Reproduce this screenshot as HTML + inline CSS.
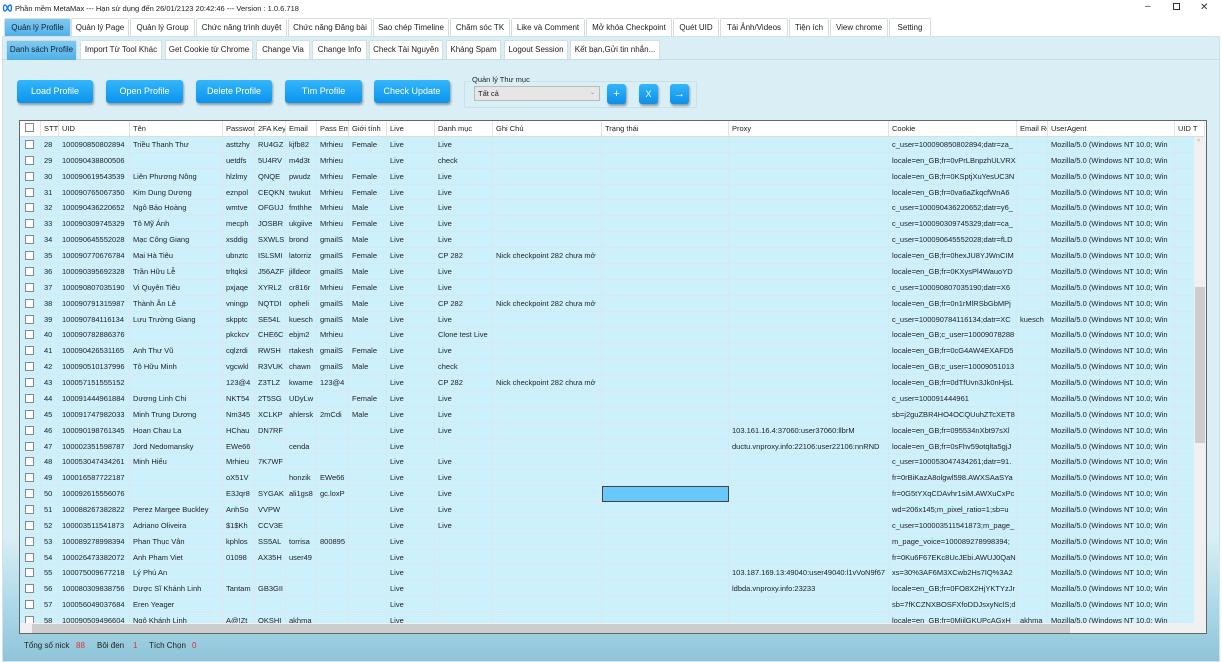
<!DOCTYPE html>
<html><head><meta charset="utf-8">
<style>
*{box-sizing:border-box;margin:0;padding:0}
body{width:1222px;height:662px;overflow:hidden;background:#fff;font-family:"Liberation Sans","Noto Sans CJK SC",sans-serif;font-size:8px;color:#222;position:relative}
.abs{position:absolute}
.title{left:0;top:0;width:1222px;height:17px;background:#fff}
.tab{position:absolute;height:19px;border:1px solid #d6dde0;border-bottom:none;background:#fff;font-size:8px;text-align:center;line-height:18px;color:#222;border-radius:2px 2px 0 0}
.tab.act{background:linear-gradient(#7fc9f1,#4fb0e8);color:#123}
.panel{left:2px;top:36px;width:1218px;height:626px;background:linear-gradient(#d9eff5 0,#d9eff5 80%,#a6d5e6 93%,#8fc4d8 100%);border:1px solid #cfe3ea}
.btn{position:absolute;top:80px;height:23px;border-radius:3px;background:linear-gradient(#33b6fb,#0c93ee);color:#fff;font-size:9px;text-align:center;line-height:23px;box-shadow:1px 2px 2px rgba(0,0,0,.35)}
.sb{position:absolute;top:84px;width:19px;height:20px;border-radius:3px;background:linear-gradient(#33b6fb,#0c8fe9);color:#fff;text-align:center;line-height:20px;font-size:11px;box-shadow:1px 2px 2px rgba(0,0,0,.35)}
.grid{left:19px;top:120px;width:1188px;height:514px;border:1px solid #666;background:#fff;overflow:hidden}
.row{position:absolute;left:0;height:15.87px;display:flex;white-space:nowrap}
.row div{flex:none;overflow:hidden;border-right:1px solid #dbe7ea;border-bottom:1px solid #dbe7ea;padding-left:3px;line-height:15px;font-size:7.5px}
.hd div{background:#fff;border-right:1px solid #e3e3e3;border-bottom:1px solid #ddd}
.bd div{background:#cdf0fd}
.cb{width:9px;height:9px;border:1px solid #888;background:#fff;display:inline-block;margin-top:3px;margin-left:2px}
</style></head><body>
<div class="abs title">
<svg class="abs" style="left:2px;top:4px" width="11" height="8" viewBox="0 0 11 8"><path d="M3 1C1 1 1 7 3 7 5 7 6 1 8 1 10 1 10 7 8 7 6 7 5 1 3 1Z" fill="none" stroke="#1877f2" stroke-width="1.4"/></svg>
<div class="abs" style="left:15px;top:4px;font-size:7.5px">Phần mềm MetaMax --- Hạn sử dụng đến 26/01/2123 20:42:46 --- Version : 1.0.6.718</div>
<div class="abs" style="left:1145px;top:1px;font-size:10px;color:#333">–</div>
<div class="abs" style="left:1173px;top:3px;width:7px;height:7px;border:1px solid #333"></div>
<div class="abs" style="left:1200px;top:2px;font-size:10px;color:#333">✕</div>
</div>
<div class="tab act" style="left:4px;top:18px;width:67px">Quản lý Profile</div>
<div class="tab" style="left:71px;top:18px;width:58px">Quản lý Page</div>
<div class="tab" style="left:130px;top:18px;width:65px">Quản lý Group</div>
<div class="tab" style="left:196px;top:18px;width:91px">Chức năng trình duyệt</div>
<div class="tab" style="left:288px;top:18px;width:84px">Chức năng Đăng bài</div>
<div class="tab" style="left:373px;top:18px;width:76px">Sao chép Timeline</div>
<div class="tab" style="left:450px;top:18px;width:60px">Chăm sóc TK</div>
<div class="tab" style="left:511px;top:18px;width:74px">Like và Comment</div>
<div class="tab" style="left:586px;top:18px;width:86px">Mở khóa Checkpoint</div>
<div class="tab" style="left:673px;top:18px;width:46px">Quét UID</div>
<div class="tab" style="left:720px;top:18px;width:68px">Tải Ảnh/Videos</div>
<div class="tab" style="left:789px;top:18px;width:40px">Tiện ích</div>
<div class="tab" style="left:830px;top:18px;width:58px">View chrome</div>
<div class="tab" style="left:889px;top:18px;width:42px">Setting</div>
<div class="abs panel"></div>
<div class="abs" style="left:2px;top:59px;width:1218px;height:1px;background:#c4dde6"></div>
<div class="tab act" style="left:6px;top:40px;width:71px;height:20px">Danh sách Profile</div>
<div class="tab" style="left:80px;top:40px;width:82px">Import Từ Tool Khác</div>
<div class="tab" style="left:165px;top:40px;width:88px">Get Cookie từ Chrome</div>
<div class="tab" style="left:256px;top:40px;width:54px">Change Via</div>
<div class="tab" style="left:312px;top:40px;width:55px">Change Info</div>
<div class="tab" style="left:369px;top:40px;width:74px">Check Tài Nguyên</div>
<div class="tab" style="left:446px;top:40px;width:55px">Kháng Spam</div>
<div class="tab" style="left:504px;top:40px;width:64px">Logout Session</div>
<div class="tab" style="left:570px;top:40px;width:90px">Kết bạn,Gửi tin nhắn...</div>
<div class="btn" style="left:17px;width:76px">Load Profile</div>
<div class="btn" style="left:106px;width:77px">Open Profile</div>
<div class="btn" style="left:196px;width:76px">Delete Profile</div>
<div class="btn" style="left:285px;width:77px">Tìm Profile</div>
<div class="btn" style="left:374px;width:76px">Check Update</div>
<div class="abs" style="left:464px;top:81px;width:233px;height:27px;border:1px solid #c8e2ea;border-radius:2px"></div>
<div class="abs" style="left:471px;top:75px;font-size:7.5px;background:#d9eff5;padding:0 1px">Quản lý Thư mục</div>
<div class="abs" style="left:474px;top:86px;width:126px;height:15px;border:1px solid #bbb;background:#e6e6e6;font-size:7.5px;line-height:13px;padding-left:3px">Tất cả<span style="position:absolute;right:4px;color:#888;font-size:6px">⌄</span></div>
<div class="sb" style="left:607px">+</div>
<div class="sb" style="left:639px;font-size:9px">X</div>
<div class="sb" style="left:670px">→</div>
<div class="abs grid">
<div class="row hd" style="top:0;height:16px">
<div style="width:21px"><span class="cb" style="margin-top:2px"></span></div><div style="width:18px">STT</div><div style="width:71px">UID</div><div style="width:93px">Tên</div><div style="width:32px">Password</div><div style="width:31px">2FA Key</div><div style="width:31px">Email</div><div style="width:32px">Pass Email</div><div style="width:38px">Giới tính</div><div style="width:48px">Live</div><div style="width:58px">Danh mục</div><div style="width:109px">Ghi Chú</div><div style="width:127px">Trạng thái</div><div style="width:160px">Proxy</div><div style="width:128px">Cookie</div><div style="width:31px">Email Recovery</div><div style="width:127px">UserAgent</div><div style="width:30px">UID T</div>
</div>
<div id="rows"></div>
<div class="abs" style="left:1174px;top:16px;width:12px;height:486px;background:#f0f0f0"></div>
<div class="abs" style="left:1175px;top:166px;width:10px;height:156px;background:#cdcdcd"></div>
<div class="abs" style="left:1177px;top:18px;font-size:7px;color:#aaa">^</div>
<div class="abs" style="left:0;top:502px;width:1186px;height:11px;background:#f0f0f0"></div>
<div class="abs" style="left:12px;top:503px;width:1038px;height:9px;background:#cdcdcd"></div>
</div>
<div class="abs" style="left:24px;top:641px;font-size:8px">Tổng số nick</div>
<div class="abs" style="left:76px;top:641px;font-size:8px;color:#e03030">88</div>
<div class="abs" style="left:97px;top:641px;font-size:8px">Bôi đen</div>
<div class="abs" style="left:133px;top:641px;font-size:8px;color:#e03030">1</div>
<div class="abs" style="left:149px;top:641px;font-size:8px">Tích Chọn</div>
<div class="abs" style="left:192px;top:641px;font-size:8px;color:#e03030">0</div>
<script>
var W=[21,18,71,93,32,31,31,32,38,48,58,109,127,160,128,31,127,30];
var UA="Mozilla/5.0 (Windows NT 10.0; Win";
var N="Nick checkpoint 282 chưa mở";
var D=[
[28,"100090850802894","Triều Thanh Thư","asttzhy","RU4GZ","kjfb82","Mrhieu","Female","Live","Live","","","","c_user=100090850802894;datr=za_",""],
[29,"100090438800506","","uetdfs","5U4RV","m4d3t","Mrhieu","","Live","check","","","","locale=en_GB;fr=0vPrLBnpzhULVRX",""],
[30,"100090619543539","Liên Phương Nông","hlzlmy","QNQE","pwudz","Mrhieu","Female","Live","Live","","","","locale=en_GB;fr=0KSptjXuYesUC3N",""],
[31,"100090765067350","Kim Dung Dương","eznpol","CEQKN","twukut","Mrhieu","Female","Live","Live","","","","locale=en_GB;fr=0va6aZkqcfWnA6",""],
[32,"100090436220652","Ngô Bảo Hoàng","wmtve","OFGUJ","fmthhe","Mrhieu","Male","Live","Live","","","","c_user=100090436220652;datr=y6_",""],
[33,"100090309745329","Tô Mỹ Ánh","mecph","JOSBR","ukgiive","Mrhieu","Female","Live","Live","","","","c_user=100090309745329;datr=ca_",""],
[34,"100090645552028","Mạc Công Giang","xsddig","SXWLS","brond","gmailS","Male","Live","Live","","","","c_user=100090645552028;datr=fLD",""],
[35,"100090770676784","Mai Hà Tiêu","ubnztc","ISLSMI","latorriz","gmailS","Female","Live","CP 282",N,"","","locale=en_GB;fr=0hexJU8YJWnCIM",""],
[36,"100090395692328","Trần Hữu Lễ","trltqksi","J56AZF","jilldeor","gmailS","Male","Live","Live","","","","locale=en_GB;fr=0KXysPl4WauoYD",""],
[37,"100090807035190","Vi Quyên Tiêu","pxjaqe","XYRL2","cr816r","Mrhieu","Female","Live","Live","","","","c_user=100090807035190;datr=X6",""],
[38,"100090791315987","Thành Ân Lê","vningp","NQTDI","opheli","gmailS","Male","Live","CP 282",N,"","","locale=en_GB;fr=0n1rMlRSbGbMPj",""],
[39,"100090784116134","Lưu Trường Giang","skpptc","SE54L","kuesch","gmailS","Male","Live","Live","","","","c_user=100090784116134;datr=XC","kuesch"],
[40,"100090782886376","","pkckcv","CHE6C","ebjm2","Mrhieu","","Live","Clone test Live","","","","locale=en_GB;c_user=10009078288",""],
[41,"100090426531165","Anh Thư Vũ","cqlzrdi","RWSH","rtakesh","gmailS","Female","Live","Live","","","","locale=en_GB;fr=0cG4AW4EXAFD5",""],
[42,"100090510137996","Tô Hữu Minh","vgcwkl","R3VUK","chawn","gmailS","Male","Live","check","","","","locale=en_GB;c_user=10009051013",""],
[43,"100057151555152","","123@4","Z3TLZ","kwame","123@4","","Live","CP 282",N,"","","locale=en_GB;fr=0dTfUvn3Jk0nHjsL",""],
[44,"100091444961884","Dương Linh Chi","NKT54","2T5SG","UDyLw","","Female","Live","Live","","","","c_user=100091444961",""],
[45,"100091747982033","Minh Trung Dương","Nm345","XCLKP","ahlersk","2mCdi","Male","Live","Live","","","","sb=j2guZBR4HO4OCQUuhZTcXET8",""],
[46,"100090198761345","Hoan Chau La","HChau","DN7RF","","","","Live","Live","","","103.161.16.4:37060:user37060:llbrM","locale=en_GB;fr=095534nXbt97sXl",""],
[47,"100002351598787","Jord Nedomansky","EWe66","","cenda","","","Live","","","","ductu.vnproxy.info:22106:user22106:nnRND","locale=en_GB;fr=0sFhv59otqlta5gjJ",""],
[48,"100053047434261","Minh Hiếu","Mrhieu","7K7WF","","","","Live","Live","","","","c_user=100053047434261;datr=91.",""],
[49,"100016587722187","","oX51V","","honzik","EWe66","","Live","Live","","","","fr=0rBiKazA8olgwl598.AWXSAaSYa",""],
[50,"100092615556076","","E3Jqr8","SYGAK","ali1gs8","gc.loxP","","Live","Live","","SEL","","fr=0G5tYXqCDAvhr1siM.AWXuCxPc",""],
[51,"100088267382822","Perez Margee Buckley","AnhSo","VVPW","","","","Live","Live","","","","wd=206x145;m_pixel_ratio=1;sb=u",""],
[52,"100003511541873","Adriano Oliveira","$1$Kh","CCV3E","","","","Live","Live","","","","c_user=100003511541873;m_page_",""],
[53,"100089278998394","Phan Thục Vân","kphlos","SS5AL","torrisa","800895","","Live","","","","","m_page_voice=100089278998394;",""],
[54,"100026473382072","Anh Pham Viet","01098","AX35H","user49","","","Live","","","","","fr=0Ku6F67EKc8UcJEbi.AWUJ0QaN",""],
[55,"100075009677218","Lý Phú An","","","","","","Live","","","","103.187.169.13:49040:user49040:l1vVoN9f67","xs=30%3AF6M3XCwb2Hs7IQ%3A2",""],
[56,"100080309838756","Dược Sĩ Khánh Linh","Tantam","GB3GII","","","","Live","","","","ldbda.vnproxy.info:23233","locale=en_GB;fr=0FO8X2HjYKTYzJr",""],
[57,"100056049037684","Eren Yeager","","","","","","Live","","","","","sb=7fKCZNXBOSFXfoDDJsxyNclS;d",""],
[58,"100090509496604","Ngô Khánh Linh","A@!Zt","OKSHI","akhma","","","Live","","","","","locale=en_GB;fr=0MiilGKUPcAGxH","akhma"]];
var h="";
D.forEach(function(r,i){
 var c=['<span class="cb"></span>'].concat(r.slice(0,13),[r[13],r[14],UA,""]);
 h+='<div class="row bd" style="top:'+(16+i*15.87)+'px">';
 for(var k=0;k<W.length;k++){
  var v=c[k],st='width:'+W[k]+'px';
  if(v==="SEL"){v="";st+=';background:#66c8fb;border:1px solid #444';}
  h+='<div style="'+st+'">'+v+'</div>';
 }
 h+='</div>';
});
document.getElementById('rows').outerHTML=h;
</script>
</body></html>
